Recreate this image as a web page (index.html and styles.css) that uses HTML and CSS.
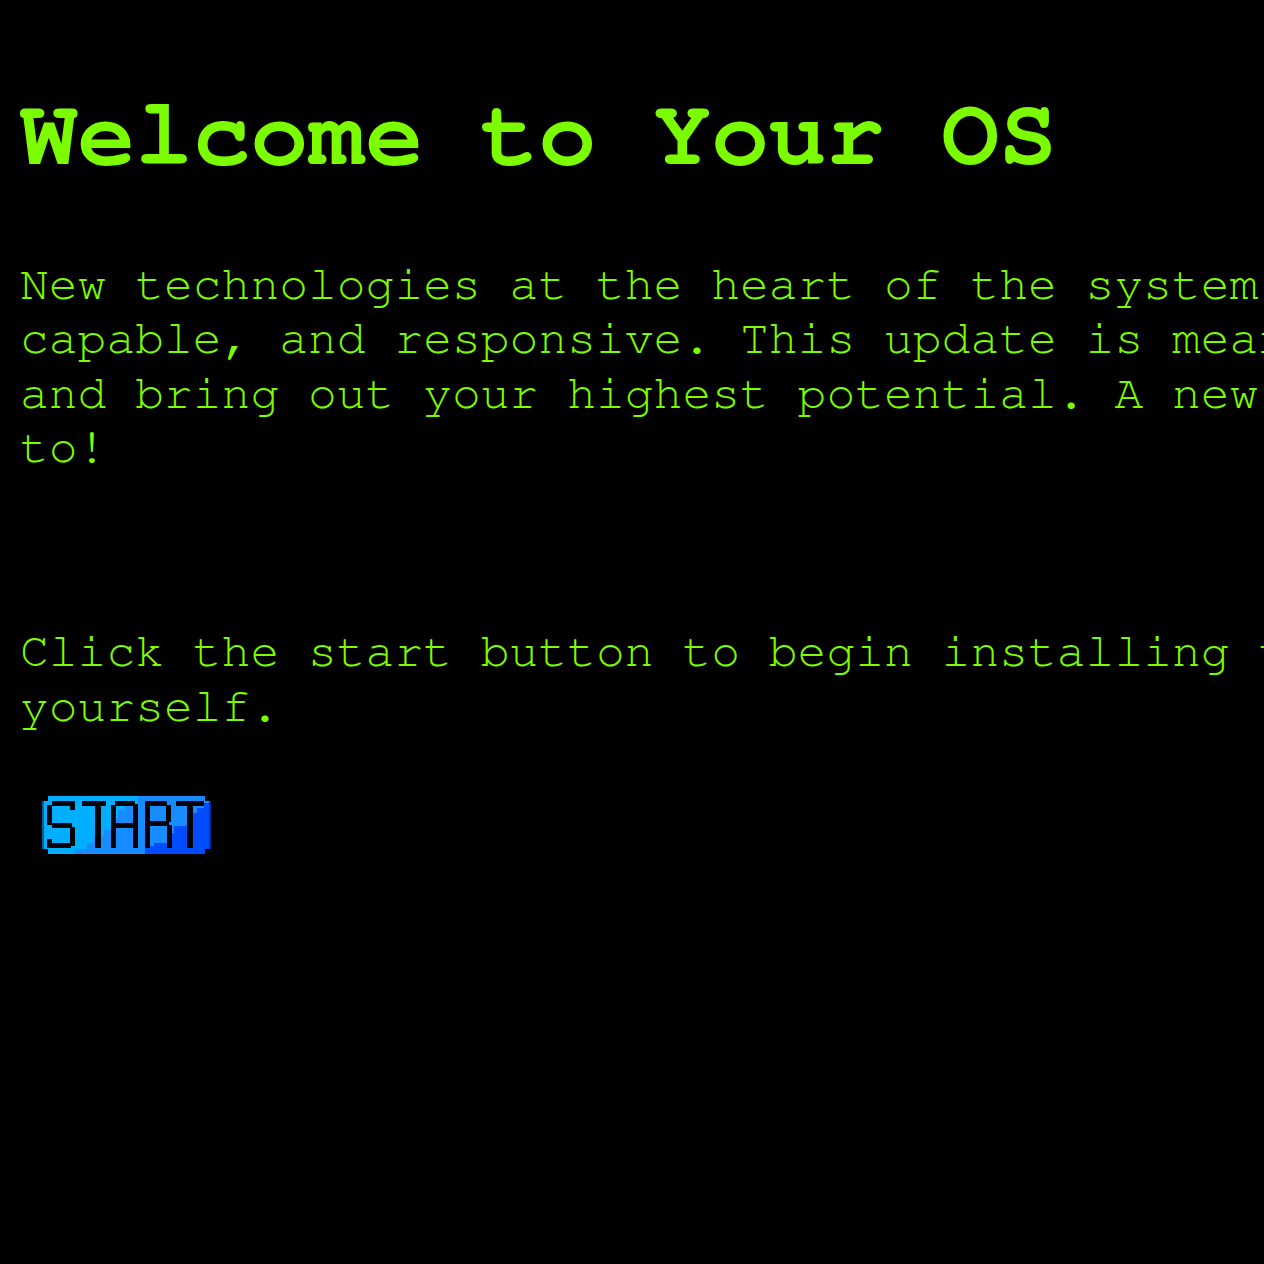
FILE: index.html
```html
<!DOCTYPE html>
<html lang="en">
<head>
<meta charset="utf-8">
<title>Welcome to Your OS</title>
<link rel="stylesheet" href="styles.css">
</head>
<body>
<main class="screen">
  <h1 class="title">Welcome to Your OS</h1>
  <p class="text">New technologies at the heart of the system make it faster, more capable, and responsive. This update is meant to enhance your experience and bring out your highest potential. A new experience to look forward to!</p>
  <p class="text text-gap">Click the start button to begin installing the update and see it for yourself.</p>
  <button class="start" type="button" aria-label="START">
    <svg class="start-art" width="169" height="58" viewBox="0 0 169 58" shape-rendering="crispEdges" aria-hidden="true">
      <defs>
        <clipPath id="body">
          <path d="M6 0H163V5H169V53H163V58H6V53H0V5H6Z"/>
        </clipPath>
      </defs>
      <g clip-path="url(#body)">
        <rect x="0" y="0" width="169" height="58" fill="#00aeff"/>
        <polygon fill="#168cff" points="33,58 33,53 45,53 45,47 52,47 52,40 62,40 62,34 69,34 69,22 76,22 76,14 83,14 83,9 96,9 96,0 169,0 169,58"/>
        <polygon fill="#004cff" points="103,58 103,50 112,50 112,47 125,47 125,37 132,37 132,30 145,30 145,17 155,17 155,12 162,12 162,7 169,7 169,58"/>
        <rect x="0" y="5" width="2" height="48" fill="#005f94"/>
        <rect x="167" y="5" width="2" height="48" fill="#00309a"/>
      </g>
      <g fill="#000308">
        <!-- S -->
        <rect x="10" y="5" width="23" height="5"/>
        <rect x="28" y="5" width="5" height="9"/>
        <rect x="5" y="9" width="5" height="20"/>
        <rect x="10" y="27" width="20" height="5"/>
        <rect x="28" y="31" width="5" height="19"/>
        <rect x="5" y="47" width="24" height="5"/>
        <rect x="5" y="43" width="5" height="9"/>
        <!-- T -->
        <rect x="40" y="5" width="24" height="5"/>
        <rect x="53" y="8" width="6" height="44"/>
        <!-- A -->
        <rect x="73" y="5" width="20" height="5"/>
        <rect x="69" y="9" width="5" height="43"/>
        <rect x="91" y="8" width="5" height="44"/>
        <rect x="73" y="27" width="20" height="5"/>
        <!-- R -->
        <rect x="103" y="5" width="22" height="5"/>
        <rect x="103" y="5" width="5" height="47"/>
        <rect x="124" y="9" width="5" height="17"/>
        <rect x="108" y="25" width="19" height="5"/>
        <rect x="125" y="29" width="5" height="23"/>
        <!-- T -->
        <rect x="134" y="5" width="28" height="5"/>
        <rect x="145" y="8" width="6" height="44"/>
      </g>
    </svg>
  </button>
</main>
</body>
</html>
```

FILE: styles.css
```css
html {
  overflow: hidden;
  background: #000;
}

body {
  margin: 0;
  background: #000;
  color: #7cfc00;
  font-family: "Nimbus Mono PS", "Nimbus Mono L", FreeMono, Courier, "Courier New", "Liberation Mono", monospace;
}

.screen {
  padding: 17px 20px 0;
}

.title {
  margin: 64px 0 68px;
  font-size: 96px;
  font-weight: bold;
  line-height: 1.133;
  white-space: nowrap;
}

.text {
  width: 2085px;
  margin: 48px 0;
  font-size: 48px;
  line-height: 1.133;
}

.text-gap {
  margin-top: 150px;
}

.start {
  display: block;
  margin: 62px 0 0 22px;
  padding: 0;
  border: 0;
  background: none;
  cursor: pointer;
  line-height: 0;
}

.start-art {
  display: block;
}
```
